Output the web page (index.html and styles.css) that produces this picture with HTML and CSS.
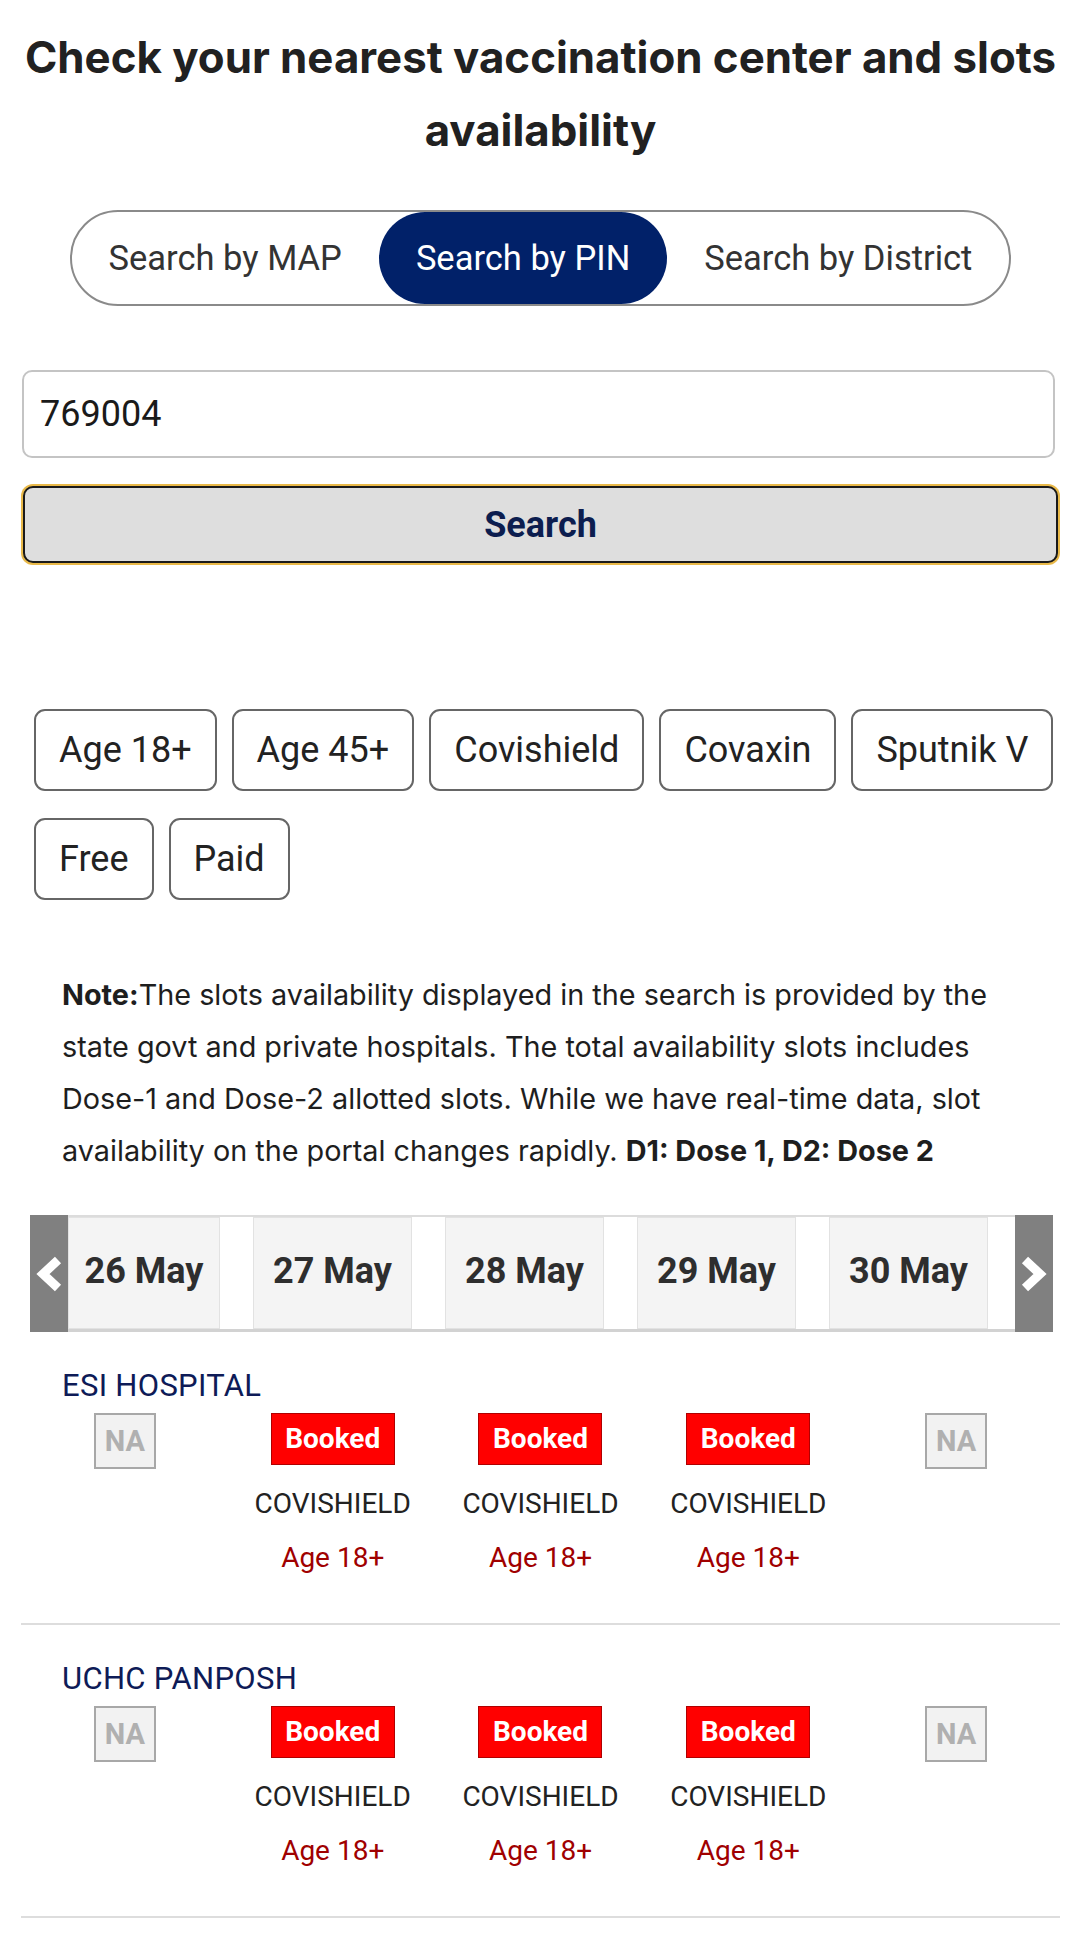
FILE: index.html
```html
<!DOCTYPE html>
<html lang="en">
<head>
<meta charset="utf-8">
<title>Vaccination slots</title>
<link rel="stylesheet" href="styles.css">
</head>
<body>
<main class="page">
  <h1 class="title">Check your nearest vaccination center and slots availability</h1>

  <div class="tabs">
    <div class="tab">Search by MAP</div>
    <div class="tab tab-active">Search by PIN</div>
    <div class="tab">Search by District</div>
  </div>

  <div class="search">
    <div class="pin-input">769004</div>
    <button class="search-btn">Search</button>
  </div>

  <div class="chips">
    <span class="chip">Age 18+</span>
    <span class="chip">Age 45+</span>
    <span class="chip">Covishield</span>
    <span class="chip">Covaxin</span>
    <span class="chip">Sputnik V</span>
    <span class="chip">Free</span>
    <span class="chip">Paid</span>
  </div>

  <p class="note"><b>Note:</b>The slots availability displayed in the search is provided by the state govt and private hospitals. The total availability slots includes Dose-1 and Dose-2 allotted slots. While we have real-time data, slot availability on the portal changes rapidly. <b>D1: Dose 1, D2: Dose 2</b></p>

  <div class="dates">
    <div class="arrow">
      <svg width="30" height="38" viewBox="0 0 30 38"><polyline points="24,5 9,19 24,33" fill="none" stroke="#fff" stroke-width="9"/></svg>
    </div>
    <div class="date-track">
      <div class="date date-first">26 May</div>
      <div class="date">27 May</div>
      <div class="date">28 May</div>
      <div class="date">29 May</div>
      <div class="date">30 May</div>
    </div>
    <div class="arrow">
      <svg width="30" height="38" viewBox="0 0 30 38"><polyline points="6,5 21,19 6,33" fill="none" stroke="#fff" stroke-width="9"/></svg>
    </div>
  </div>

  <section class="center">
    <div class="center-name">ESI HOSPITAL</div>
    <div class="slots">
      <div class="slot"><span class="na">NA</span></div>
      <div class="slot"><span class="booked">Booked</span><span class="vaccine">COVISHIELD</span><span class="age">Age 18+</span></div>
      <div class="slot"><span class="booked">Booked</span><span class="vaccine">COVISHIELD</span><span class="age">Age 18+</span></div>
      <div class="slot"><span class="booked">Booked</span><span class="vaccine">COVISHIELD</span><span class="age">Age 18+</span></div>
      <div class="slot"><span class="na">NA</span></div>
    </div>
  </section>

  <section class="center">
    <div class="center-name">UCHC PANPOSH</div>
    <div class="slots">
      <div class="slot"><span class="na">NA</span></div>
      <div class="slot"><span class="booked">Booked</span><span class="vaccine">COVISHIELD</span><span class="age">Age 18+</span></div>
      <div class="slot"><span class="booked">Booked</span><span class="vaccine">COVISHIELD</span><span class="age">Age 18+</span></div>
      <div class="slot"><span class="booked">Booked</span><span class="vaccine">COVISHIELD</span><span class="age">Age 18+</span></div>
      <div class="slot"><span class="na">NA</span></div>
    </div>
  </section>
</main>
</body>
</html>
```

FILE: styles.css
```css
* { box-sizing: border-box; }

html, body {
  margin: 0;
  padding: 0;
  background: #fff;
}

body {
  font-family: Roboto, "Noto Sans", "Liberation Sans", sans-serif;
  color: #222;
}

.page {
  width: 1080px;
  padding: 0 20px 0 21px;
}

.title {
  margin: 0;
  padding-top: 21px;
  font-family: Inter, Roboto, "Liberation Sans", sans-serif;
  font-size: 43.8px;
  line-height: 73px;
  font-weight: 700;
  text-align: center;
  color: #212121;
}

.tabs {
  display: flex;
  width: fit-content;
  height: 96px;
  margin: 43px auto 0;
  border: 2px solid #8a8a8a;
  border-radius: 50px;
}

.tab {
  padding: 0 37px;
  font-size: 34.5px;
  line-height: 92px;
  color: #333;
  border-radius: 48px;
  white-space: nowrap;
}

.tab-active {
  background: #012169;
  color: #fff;
}

.search {
  display: flex;
  flex-direction: column;
  margin-top: 64px;
}

.pin-input {
  width: 1033px;
  height: 88px;
  margin-left: 1px;
  padding: 0 16px;
  border: 2px solid #c4c4c4;
  border-radius: 10px;
  font-size: 36px;
  line-height: 84px;
  color: #1a1a1a;
}

.search-btn {
  height: 77px;
  margin: 28px 2px 0;
  border: 2px solid #1a1a1a;
  border-radius: 10px;
  box-shadow: 0 0 0 2px #e9b949;
  background: #dedede;
  font-family: Roboto, "Noto Sans", "Liberation Sans", sans-serif;
  font-size: 36px;
  font-weight: 700;
  color: #0c1d4f;
}

.chips {
  display: flex;
  flex-wrap: wrap;
  gap: 27px 15px;
  margin-top: 146px;
  padding-left: 13px;
}

.chip {
  height: 82px;
  padding: 0 23px;
  border: 2px solid #666;
  border-radius: 11px;
  font-size: 36px;
  line-height: 78px;
  color: #222;
}

.note {
  margin: 69px 0 0;
  padding: 0 46px 0 41px;
  font-family: Inter, Roboto, "Liberation Sans", sans-serif;
  font-size: 28.8px;
  line-height: 52px;
  color: #1e1e1e;
}

.note b { font-weight: 700; }

.dates {
  display: flex;
  height: 117px;
  margin: 38px 7px 0 9px;
}

.arrow {
  flex: 0 0 38px;
  display: flex;
  align-items: center;
  justify-content: center;
  background: #808080;
}

.date-track {
  flex: 1;
  display: flex;
  gap: 33px;
  border-top: 2px solid #dcdcdc;
  border-bottom: 3px solid #d2d2d2;
  background: #fff;
}

.date {
  flex: 0 0 159px;
  display: flex;
  align-items: center;
  justify-content: center;
  background: #f4f4f4;
  border: 1px solid #e2e2e2;
  font-size: 36px;
  font-weight: 700;
  color: #2e2e2e;
  padding-bottom: 5px;
}

.date-first {
  flex-basis: 152px;
}

.center {
  padding: 36px 0 48px;
  border-bottom: 2px solid #dddddd;
}

.center-name {
  padding-left: 41px;
  font-size: 31px;
  letter-spacing: 0.3px;
  line-height: 36px;
  color: #0e1b57;
}

.slots {
  display: grid;
  grid-template-columns: repeat(5, 1fr);
  margin-top: 9px;
}

.slot {
  display: flex;
  flex-direction: column;
  align-items: center;
}

.na {
  width: 62px;
  height: 56px;
  border: 2px solid #a8a8a8;
  background: #f2f2f2;
  font-size: 29px;
  font-weight: 700;
  line-height: 52px;
  text-align: center;
  color: #b0b0b0;
}

.booked {
  width: 124px;
  height: 52px;
  border: 1px solid #b00000;
  background: #ff0000;
  font-size: 28px;
  font-weight: 700;
  line-height: 50px;
  text-align: center;
  color: #fff;
}

.vaccine {
  margin-top: 22px;
  font-size: 28px;
  line-height: 34px;
  color: #222;
}

.age {
  margin-top: 20px;
  font-size: 28px;
  line-height: 34px;
  color: #a00000;
}
```
